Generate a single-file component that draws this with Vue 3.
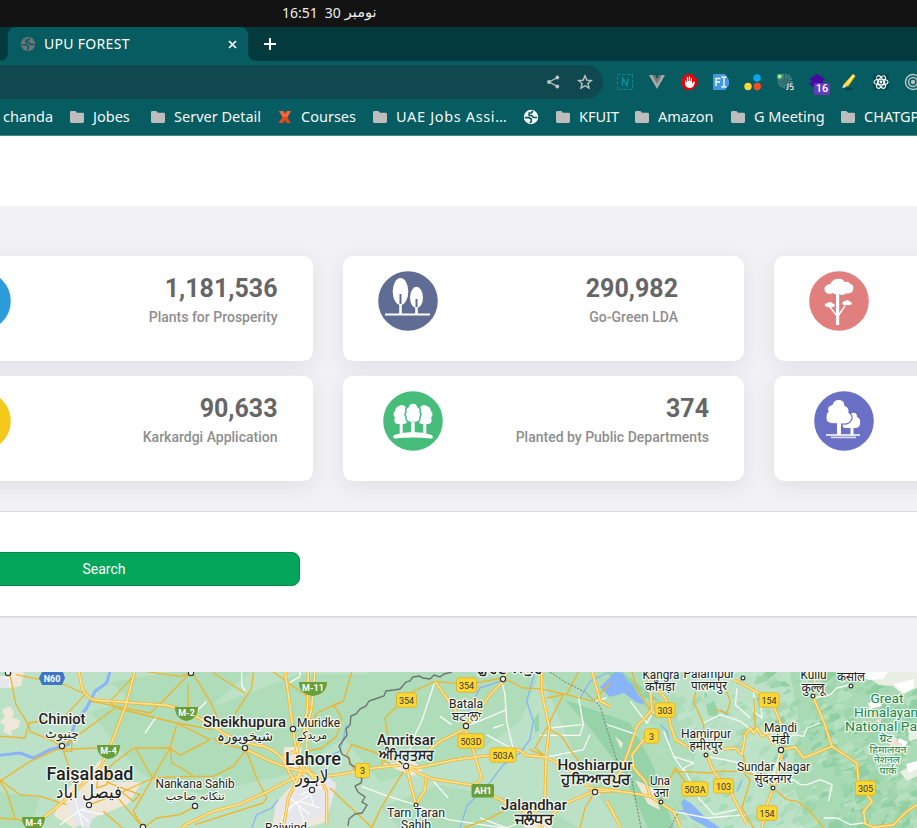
<script setup>
const bookmarks = [
  { label: 'chanda', icon: 'none', w: 67 },
  { label: 'Jobes', icon: 'folder', w: 81 },
  { label: 'Server Detail', icon: 'folder', w: 127 },
  { label: 'Courses', icon: 'x', w: 95 },
  { label: 'UAE Jobs Assi…', icon: 'folder', w: 151, wide: true },
  { label: '', icon: 'globe', w: 32 },
  { label: 'KFUIT', icon: 'folder', w: 79 },
  { label: 'Amazon', icon: 'folder', w: 96 },
  { label: 'G Meeting', icon: 'folder', w: 110 },
  { label: 'CHATGPT', icon: 'folder', w: 110 },
]
const cards = [
  { value: '1,181,536', label: 'Plants for Prosperity', tone: '#2d9cdb', icon: 'none', l: 38.5, r: 35.5 },
  { value: '290,982', label: 'Go-Green LDA', tone: '#5f6c94', icon: 'ovals', l: 34.5, r: 66 },
  { value: '', label: '', tone: '#e17e7e', icon: 'acacia', l: 34.5, r: 35 },
  { value: '90,633', label: 'Karkardgi Application', tone: '#f5c91b', icon: 'none', l: 38.5, r: 35.5 },
  { value: '374', label: 'Planted by Public Departments', tone: '#47bd7c', icon: 'grove', l: 39.5, r: 35 },
  { value: '', label: '', tone: '#6a70c6', icon: 'pair', l: 39.5, r: 35 },
]

// Each map sheet uses a grid three times finer than the page.
const sheets = [
  {
    x: 0,
    major: [
      'M236 8L246 60Q262 95 290 97L500 112Q560 125 640 175Q700 222 790 235Q850 255 866 310L890 350',
      'M405 8L378 110L350 185L326 245L300 300L225 370L60 510',
      'M530 495L560 468L640 430L720 408L800 372L860 340L935 305',
      'M855 8L868 100L884 220L905 300L880 360L865 390L850 480',
      'M740 245L800 275L870 302L940 315',
      'M925 8L922 120L910 200L890 250L850 262',
    ],
    minor: [
      'M28 12L40 70L48 110L85 170L75 210L0 205', 'M48 20L120 35L175 42L255 78', 'M255 80L190 150L85 165', 'M275 100L350 115L450 135L470 118',
      'M85 165L90 190L160 220L185 235', 'M405 20L330 100L345 120L190 235',
      'M350 120L530 165L640 185', 'M573 12L600 50L630 100L660 165', 'M573 12L470 118M563 45L565 130', 'M760 12L755 60L700 145', 'M640 15L735 75', 'M930 90L820 12',
      'M530 170L510 240L458 330L400 430L430 480', 'M630 215L540 262L510 240L405 240L458 330', 'M512 240L515 285L545 300L580 325L640 325L700 295L735 250', 'M458 330L580 325',
      'M630 215L530 165', 'M185 235L215 320L235 350', 'M0 335L60 380L120 385L200 410', 'M0 340L90 280L170 245L290 240', 'M0 340L20 370L45 450', 'M400 240L330 295L320 350L290 360L295 315L325 300', 'M320 290L325 345L420 380L400 400L350 360',
      'M270 410L360 375L458 330', 'M350 385L430 480', 'M430 480L470 450L540 440L585 415', 'M740 250L770 330L800 390L790 405L585 470', 'M310 430L390 500', 'M0 450L60 455L90 480', 'M215 215L215 250L190 250M190 220L215 220', 'M420 8L540 25L573 15', 'M640 210L660 225L740 245',
    ],
    white: ['M470 145L435 195M585 135L620 100M735 70L725 50L725 12M860 50L900 25L900 12M180 470L235 430L280 410M230 430L265 460M220 370L235 430L250 480M240 425L310 440M850 430L930 380M845 450L890 400L920 480M870 390L930 440M30 20L30 60M10 30L50 25'],
    river: ['M330 10L320 45L285 70L260 120L225 165L205 230L150 245L100 270L60 255L0 262'],
    stream: ['M835 395L815 420L770 440L755 480'],
  },
  {
    x: 300,
    major: [
      'M45 8L35 120L20 190L20 300L40 330L75 325L115 320L220 300L315 290', 'M315 290L350 300L465 275L545 265L625 260L655 245L680 262L740 268L810 305L880 370',
      'M315 290L355 315L395 332L520 352L610 400L690 440L730 480', 'M405 40L450 105L495 170', 'M620 12L605 45L570 80L550 110L500 170', 'M490 185L420 220L345 280',
      'M495 185L515 230L525 265L545 330L520 355L555 370', 'M725 12L725 70L748 180L738 268L735 390L690 460', 'M320 300L335 360L348 410L375 365L378 330', 'M-20 275L20 310L60 330L80 370L80 470', 'M880 370L800 405L730 460', 'M880 370L940 370',
    ],
    minor: [
      'M405 40L330 75L255 150L265 215L245 290', 'M405 40L500 50L608 30L670 60L720 62L800 80L880 100L930 45', 'M155 230L140 260L165 310M155 230L230 255L270 290',
      'M155 12L130 100L100 110L125 150L110 205L65 240L20 250M130 100L50 135L20 190', 'M310 310L240 425L215 480M240 425L215 478L90 360', 'M740 180L705 240L735 265L690 245M740 180L785 205L820 260L840 285M740 180L790 80L740 90',
      'M880 380L855 420L840 480', 'M835 12L800 80', 'M490 480L560 455L610 430',
    ],
    white: ['M405 40L365 160L345 200L315 290M605 40L615 80L620 160L640 245L560 200M620 125L500 175M420 145L455 170M185 355L265 385L345 410L445 455L610 480M400 340L445 390M720 202L840 202L850 170L835 85M750 180L845 170M735 268L850 245L870 200M880 100L920 90M0 350L75 320M10 300L40 410M0 380L70 355M0 400L60 420M310 280L340 310M540 450L620 480L690 450M580 180L610 170'],
    river: [],
    stream: ['M705 8L680 100L700 160L690 215L660 255L610 290L565 350L500 415L480 480', 'M140 170L120 250L20 290', 'M600 40L540 60L500 140', 'M840 90L870 40L920 15'],
  },
  {
    x: 607,
    major: [
      'M-45 8L-20 100L10 115M120 12L130 65L135 125L90 175L65 250L20 360', 'M140 55L175 90L190 170L205 215L240 235', 'M155 185L110 215L75 260L80 300L115 340L130 385L160 405', 'M380 35L410 50L455 75L500 115L525 175L520 240', 'M520 245L565 237L590 270L675 235L650 160L620 90L625 12', 'M675 235L750 285L755 350L795 400L770 430L775 465', 'M770 465L800 478L860 470L900 430L930 410', 'M300 262L320 310L375 380L420 470', 'M525 260L510 330L480 410L465 480', 'M-60 360L0 365L75 375L130 385', 'M160 405L200 430L220 475', 'M0 400L40 475',
      'M350 243L385 240L405 260L415 200L430 180L440 195L450 180L465 205L480 195L500 230',
    ],
    minor: ['M75 12L90 60L140 145M240 235L350 243M320 310L410 310L440 320L500 355M320 315L200 310M270 50L260 100L290 170L290 200M350 50L370 100L360 135L325 125M440 90L445 180L405 200M410 260L415 320L430 335L405 420L440 480M498 360L540 395L570 400L610 430L650 480M240 350L205 300L190 330L165 345L165 395'],
    white: ['M170 190L200 265L260 285L230 300L275 390L320 440L390 425M200 265L230 310M300 265L350 275L400 285L450 320M440 70L440 130L465 150L460 95M290 165L340 140L400 160L445 195M390 60L385 110L430 150M530 220L560 200L590 205L600 180L640 165M620 90L670 80L690 60L730 50M530 340L560 335L580 350L600 350L640 335L675 350L665 400M70 100L120 165L140 130M0 170L90 200M650 450L690 450L730 470L770 465M200 430L300 450L420 440M520 250L500 320'],
    river: [],
    stream: ['M160 170L180 190L185 215', 'M205 430L240 430', 'M340 125L360 140', 'M530 265L535 300', 'M390 370L405 335'],
  },
]

// Hill relief: soft facets, denser toward the mountains in the east.
const terrain = []
let seed = 71
function rnd() {
  seed = (seed * 16807) % 2147483647
  return seed / 2147483647
}
for (let i = 0; i < 620; i++) {
  const x = 635 + Math.sqrt(rnd()) * 285
  const y = rnd() * 160
  const s = 3 + rnd() * 8
  const east = x > 775 + 60 * (y / 160 - 0.5)
  const shades = east ? ['#9dd5ad', '#a9dab5', '#90cfa3', '#b6e0c0'] : ['#aedcb9', '#b4dfc0', '#bfe4ca', '#a8dab5']
  terrain.push({
    d: `M${x} ${y}l${s} ${-s * rnd()}l${s * 0.7 * rnd()} ${s * 0.6}l${-s * 0.9} ${s * 0.8 * rnd()}l${-s * 0.6} ${s * 0.1}z`,
    fill: shades[Math.floor(rnd() * 4)],
  })
}

const towns = [
  [62, 74], [8, 1], [191, 1], [293, 57], [245, 76], [89, 133], [195, 134], [143, 155], [312, 118], [406, 94], [503, 7], [466, 54], [595, 120],
  [416, 133, 1.9], [743, 6, 1.9], [813, 24, 1.9], [851, 14, 1.9], [706, 83, 1.9], [781, 78], [773, 116, 1.9], [661, 130, 1.9],
]
const shields = [
  ['354', 406.5, 28], ['354', 466.5, 13], ['503D', 471, 69], ['503A', 503, 83], ['3', 362.5, 98.5], ['303', 665, 38], ['3', 651.5, 64],
  ['154', 769, 28], ['503A', 695, 117], ['103', 723.5, 114], ['154', 767, 141], ['305', 865.5, 116],
].map(([t, x, y]) => ({ t, x, y, w: t.length === 4 ? 26 : t.length === 3 ? 20 : 14 }))
const motorways = [['M-11', 313, 16, 28], ['M-2', 186.5, 41, 23], ['M-4', 108.5, 79, 23], ['M-4', 33.5, 151, 23]]

const labels = [
  ['Chiniot', 62, 52, 14.5, 47, 'b'], ['چنیوٹ', 62, 66, 13, 34], ['Sheikhupura', 244.5, 55, 14.5, 83, 'b'], ['شیخوپورہ', 245, 69, 14, 56],
  ['Muridke', 318.5, 55, 12, 43], ['مریدکے', 312, 67, 11, 30], ['Lahore', 313, 93, 18, 56, 'b'], ['لاہور', 312, 111, 18, 33],
  ['Faisalabad', 90, 108, 18, 87, 'b'], ['فیصل آباد', 89, 126, 18, 66], ['Nankana Sahib', 195, 116, 12, 79], ['ننکانہ صاحب', 195, 128, 11, 59], ['Raiwind', 286, 160, 12, 42],
  ['Amritsar', 406, 73, 15, 58, 'b'], ['ਅੰਮ੍ਰਿਤਸਰ', 406, 88, 14, 55, 'h'], ['Batala', 466, 36, 12, 34], ['ਬਟਾਲਾ', 466, 48, 12, 29],
  ['ਗੁਰਦਾਸਪੁਰ', 510, 1, 13, 66, 'h'], ['Tarn Taran', 416, 145, 12, 58], ['Sahib', 416, 157, 12, 30], ['Jalandhar', 534, 138, 15, 66, 'b'], ['ਜਲੰਧਰ', 534, 152, 14, 39, 'h'],
  ['Hoshiarpur', 595, 98, 15, 75, 'b'], ['ਹੁਸ਼ਿਆਰਪੁਰ', 596, 112, 14, 70, 'h'], ['Kangra', 661, 7, 12, 37], ['काँगड़ा', 660, 19, 12, 30], ['Palampur', 709, 6, 12, 51], ['पालमपुर', 709, 18, 12, 36],
  ['Kullu', 813.5, 7, 12, 26], ['कुल्लू', 813, 20, 12, 23], ['कसोल', 851, 9, 12, 28], ['Mandi', 780.5, 60, 12, 33], ['मंडी', 780.5, 72, 12, 18],
  ['Hamirpur', 706, 66, 12, 50], ['हमीरपुर', 706, 78, 12, 33], ['Sundar Nagar', 773.5, 99, 12, 73], ['सुंदरनगर', 773, 111, 12, 37], ['Una', 660, 113, 12, 20], ['उना', 661, 125, 12, 15],
  ['Great', 887, 31, 13.5, 33, 'g'], ['Himalayan', 886, 45, 13.5, 64, 'g'], ['National Park', 887, 59, 13.5, 84, 'g'],
  ['ग्रेट', 886, 70, 10, 13, 'g'], ['हिमालयन', 888, 81, 10, 37, 'g'], ['नेशनल', 887, 91, 10, 26, 'g'], ['पार्क', 888, 102, 10, 17, 'g'],
]
</script>

<template>
  <div class="screen">
    <div class="clock"><span>16:51</span><span>30</span><span class="month">نومبر</span></div>
    <div class="tabs">
      <div class="prev"></div>
      <div class="tab">
        <svg class="globe" viewBox="0 0 16 16"><circle cx="8" cy="8" r="7.1" fill="#70757a" /><path d="M1.700 8.700h4.600l2 1.500v2.300l-1.500 1.300M9.800 1.800L8.500 4H6.200v2.500h2.500l1.600 2h4" stroke="#065c61" stroke-width="1.600" fill="none" /></svg>
        <span class="title">UPU FOREST</span>
        <svg class="close" viewBox="0 0 9 9"><path d="M1 1l7 7M8 1l-7 7" stroke="#fff" stroke-width="1.7" /></svg>
      </div>
      <div class="rest"><svg viewBox="0 0 12 12"><path d="M6 0v12M0 6h12" stroke="#fff" stroke-width="2" /></svg></div>
    </div>
    <div class="toolbar">
      <div class="omnibox">
        <svg viewBox="0 0 16 16"><path d="M12.500 3.500L4 8l8.500 4.500" stroke="#bfc5c6" stroke-width="1.300" fill="none" /><circle cx="12.300" cy="3.500" r="1.900" fill="#bfc5c6" /><circle cx="4" cy="8" r="1.900" fill="#bfc5c6" /><circle cx="12.300" cy="12.500" r="1.900" fill="#bfc5c6" /></svg>
        <svg viewBox="0 0 16 16"><path d="M8 1.800l1.800 4.300 4.600.4-3.500 3 1.100 4.600L8 11.700l-4 2.400 1.100-4.600-3.500-3 4.600-.4z" stroke="#bfc5c6" stroke-width="1.400" fill="none" /></svg>
      </div>
      <div class="extensions">
        <svg viewBox="0 0 18 18"><rect x="1.500" y="1.500" width="15" height="15" fill="none" stroke="#078b9c" stroke-dasharray="3 2" /><path d="M6 13L7 5.500l4 7 1-7" stroke="#078b9c" stroke-width="1.700" fill="none" /></svg>
        <svg viewBox="0 0 18 18"><path d="M1 2h5l3 5 3-5h5L9 16z" fill="#aaa" /><path d="M4 2h3l2 4 2-4h3L9 11z" fill="#777" /></svg>
        <svg viewBox="0 0 18 18"><path d="M6 1h6l5 5v6l-5 5H6l-5-5V6z" fill="#e1080d" /><path d="M5 8v3q1 4 5 4 3 0 4-3l1-3-1-.5-2 2V5h-1.200v3H10V3.500H8.800V8H8V4H6.800v5H6V7z" fill="#fff" /></svg>
        <svg viewBox="0 0 18 18"><path d="M2 1h11l4 6v5l-4 5H2q-1 0-1-1V2q0-1 1-1z" fill="#4299df" /><path d="M4 13V5.500h4.500M4 9h4M9.500 4h1.500l1 1 1-1h1.500M12 5v8M9.500 14H11l1-1 1 1h1.500" stroke="#fff" stroke-width="1.300" fill="none" /></svg>
        <svg viewBox="0 0 18 18"><circle cx="13" cy="5" r="3.700" fill="#05a6f2" /><circle cx="4" cy="13.500" r="3.700" fill="#fbd534" /><circle cx="13.300" cy="13.500" r="3.700" fill="#f25022" /></svg>
        <svg viewBox="0 0 18 18"><circle cx="9" cy="8" r="5.300" fill="none" stroke="#427f80" stroke-width="4.500" stroke-dasharray="2 .7" /><circle cx="9" cy="8" r="4" fill="#3d7273" opacity=".8" /><rect x="1" y="1" width="5.500" height="5" rx="1" fill="#59a654" /><circle cx="3.700" cy="3.500" r="1.400" fill="#d7efd4" /><path d="M12 10.500v5q0 1-2 1M17 11h-2.500v2.500H17V16.500h-3" stroke="#ddd" fill="none" stroke-width="1.200" /></svg>
        <div class="stack"><svg viewBox="0 0 18 18"><path d="M9 1l8 5-3 2 3 3-8 5-8-5 3-3-3-2z" fill="#4609a4" /></svg><span>16</span></div>
        <svg viewBox="0 0 18 18"><path d="M3 12L13 1l2.500 2-7 10-4 1z" fill="#ffc829" /><path d="M6 11l7-9.500 1.500 1L7 12z" fill="#fff176" /><path d="M2 15l2-3 2 2z" fill="#fff" /><path d="M5 16h8" stroke="#064448" stroke-width="2" /></svg>
        <svg viewBox="0 0 18 18"><rect x="1" y="1" width="16" height="16" fill="#064c54" /><g fill="none" stroke="#fff" stroke-width="1.100"><ellipse cx="9" cy="9" rx="7" ry="2.800" /><ellipse cx="9" cy="9" rx="7" ry="2.800" transform="rotate(60 9 9)" /><ellipse cx="9" cy="9" rx="7" ry="2.800" transform="rotate(120 9 9)" /></g><circle cx="9" cy="9" r="1.400" fill="#fff" /></svg>
        <svg viewBox="0 0 18 18"><g fill="none" stroke="#b5c3c4" stroke-width="1.500"><circle cx="9" cy="9" r="7.500" /><circle cx="9" cy="9" r="4.400" /></g><circle cx="9" cy="9" r="2.200" fill="#b5c3c4" /></svg>
      </div>
    </div>
    <div class="bookmarks">
      <div v-for="b in bookmarks" :key="b.label" class="bookmark" :class="{ wide: b.wide }" :style="{ width: b.w + 'px' }">
        <svg v-if="b.icon === 'folder'" viewBox="0 0 14 12"><path d="M1.400 0h4l1.500 1.700h5.700q1.400 0 1.400 1.400v7.500Q14 12 12.600 12H1.400Q0 12 0 10.600V1.400Q0 0 1.400 0z" fill="#bdbdbd" /></svg>
        <svg v-if="b.icon === 'x'" viewBox="0 0 14 12"><path d="M1 0h4.500L7 3l2-3h4L9.500 6l3 6H8.500L7 9l-2 3H.500L4.500 6z" fill="#e8481c" /><path d="M1 0h4.500L7 3l2-3h4L9.500 6h-5z" fill="#f2683c" /></svg>
        <svg v-if="b.icon === 'globe'" class="world" viewBox="0 0 16 16"><circle cx="8" cy="8" r="7.200" fill="#fff" /><path d="M1.700 8.700h4.600l2 1.500v2.300l-1.500 1.300M9.800 1.800L8.500 4H6.200v2.500h2.500l1.600 2h4" stroke="#065c61" stroke-width="1.700" fill="none" /></svg>
        <span>{{ b.label }}</span>
      </div>
    </div>
    <div class="page-head"></div>
    <div class="cards">
      <div v-for="c in cards" :key="c.tone" class="card" :style="{ paddingLeft: c.l + 'px', paddingRight: c.r + 'px' }">
        <svg class="badge" viewBox="0 0 60 60">
          <circle cx="30" cy="30" r="29.800" :fill="c.tone" />
          <g v-if="c.icon === 'ovals'"><ellipse cx="22.500" cy="20.500" rx="7.800" ry="13.500" fill="#fff" /><ellipse cx="38.500" cy="26.500" rx="6.500" ry="10.700" fill="#fff" /><path d="M22.500 33v10M38.500 36v7" stroke="#fff" stroke-width="2.600" /><path d="M22.500 23v10M38.500 28v8" stroke="#5f6c94" stroke-width="2" /><path d="M7 43.500h45" stroke="#fff" stroke-width="2.200" /></g>
          <g v-if="c.icon === 'grove'" fill="#fff">
            <path d="M18 14q4 0 5 3 4 1 2 5 2 3 0 5 1 5-4 6h-7q-4-2-2-6-3-4 0-7 0-4 6-6zM42 14q-4 0-5 3-4 1-2 5-2 3 0 5-1 5 4 6h7q4-2 2-6 3-4 0-7 0-4-6-6z" /><path d="M16.700 32h3v11h-3zM40.300 32h3v11h-3z" /><path d="M30 12q4 0 5 4 3 1 2 5 2 2 0 5 1 5-5 5.500h-4q-6-.5-5-5.500-2-3 0-5-1-4 2-5 1-4 5-4z" stroke="#47bd7c" stroke-width="1.500" /><path d="M28.300 31h3.400v12h-3.400zM11 44q19-6 38 0 2 4-1 3.500-18-2-36 0-3 0-1-3.500z" />
          </g>
          <g v-if="c.icon === 'acacia'" fill="#fff"><path d="M20 23q-5-1-4.500-6 2-4 6-4 2-5 7-5 5-1 7 3 4-1 6 2 4 1 2.500 6-1 4-7 3.500-3 2.500-7 .5-5 1-6-1-2 1-4 1z" /><path d="M27 23h3.200v31H27z" /><path d="M21 36l7 9M36 35l-7 10" stroke="#fff" stroke-width="1.400" /><path d="M15.500 34q1-2 3-2 3-2 5 .5 3 0 2 3-3 1-4 1-5 0-6-2.500zM33 32q1-2 3-2 3-2 4 0 3 1 3 3-2 2-5 1-4 1-5-2z" /></g>
          <g v-if="c.icon === 'pair'" fill="#fff"><path d="M38 22q5-1 5 4 4 2 3 5 1 5-4 6H30q-3-3 0-6z" /><path d="M36.500 36h3v8h-3z" /><path d="M17 32.500q-6-1-5-7 0-4 2-5-2-5 4-7 2-6 8-5 5 1 5 6 5 2 4 7 5 4 2 8-2 4-8 3.500z" stroke="#6a70c6" stroke-width="1.200" /><path d="M23 31h4v13h-4z" /><path d="M12 43h34v2H12zM17 45.500h25v1.800H17z" opacity=".75" /></g>
        </svg>
        <div class="figures"><strong>{{ c.value }}</strong><span>{{ c.label }}</span></div>
      </div>
    </div>
    <div class="filter"><button class="search">Search</button></div>
    <svg class="map" viewBox="0 0 917 156" width="917" height="156">
      <rect width="917" height="156" fill="#bbe2c6" />
      <g fill="#afddb9">
        <path d="M90 40l60-18 70 10 80-30h70l-20 60-60 40-90 20-60-20zM370 0h170l-20 50-50 35-90 25-50-60zM540 0h120l40 60-20 96h-60l-40-60zM380 135l60-22 100 20 40 23h-180zM0 120l40 5-10 31H0zM110 10l60-10h80l-40 35-60 10z" />
      </g>
      <path d="M790 0h127v156H810l-20-50 10-50z" fill="#a8dab4" />
      <path d="M565 28l15 5 50 18 22 40 22 65h-26l-28-60-30-40zM534 47l5-6v18l-4 2zM704 20l10 8 6 18-12-3zM604 0h18l40 30-20-5z" fill="#96d3a8" />
      <path v-for="(p, i) in terrain" :key="i" :d="p.d" :fill="p.fill" />
      <path d="M846 0h71v16l-16 5-8-7-14-1-10-7-10 3zM900 100l17-10v14l-10 5zM886 61l12 6-6 6-8-3zM908 56l9-3v14l-8 2z" fill="#e9efe2" />
      <path d="M851 0l18 8 14-1 5-7zM894 12l20-5v9l-10 6zM868 31l10-3 4 6-12 3zM899 66l9 4-4 6-8-2zM906 92l11-3v8l-8 4z" fill="#fff" />
      <path d="M888 64l14 8 1 8-12-3zM875 49l7-3-2 6z" fill="#efdfd0" />
      <g fill="#efe8d8">
        <path d="M2 38l8-4 4 6-2 6 8 2-1 7-8 4 1 5-9-4 2-6-5-4 5-5zM12 0h12l-3 14-10 2zM62 120l28-20 10-12 8 7-2 15 36 0-14 22-30 12-24 12-20-12zM0 12l14-12v15zM276 130l20-20h40l-10 40-20 6h-34zM284 75h18l-5 25-14-9zM383 92l30-4 10 10-10 6zM525 140l22 2 5 14h-28zM635 108l18 8 7 22-12-6zM615 64l8 7-2 6z" />
      </g>
      <g fill="#e6e7ed"><path d="M68 131l12-8 6 12 9 5-6 16-14-4zM278 130l20-13 27-17 11 13-6 23-14 10-28 8-12-12zM398 92l9-5 9 8-10 6zM530 145l15-1 4 10h-15zM591 118l7-3 2 8-8 3zM0 4h13l-4 12H0z" /></g>
      <path d="M600 15l15-15 8 1 4 8 6 4 3 7 7 8 2 5-9-3-12-9-14 4zM684 127l8 5 14 14 14 10h-12l-16-9-8-8-3-8z" fill="#8ab4f8" />
      <g v-for="s in sheets" :key="'w' + s.x" :transform="`translate(${s.x} -4) scale(.33333)`" fill="none" stroke-linejoin="round">
        <path v-for="d in s.river" :key="d" :d="d" stroke="#8ab4f8" stroke-width="9" />
        <path v-for="d in s.stream" :key="d" :d="d" stroke="#8ab4f8" stroke-width="4" />
        <path v-for="d in s.white" :key="d" :d="d" stroke="#f8fbf6" stroke-width="4" />
        <path v-for="d in s.minor" :key="d" :d="d" stroke="#f0b429" stroke-width="4" />
      </g>
      <g v-for="s in sheets" :key="'m' + s.x" :transform="`translate(${s.x} -4) scale(.33333)`" fill="none" stroke-linejoin="round">
        <path v-for="d in s.major" :key="d" :d="d" stroke="#f2b634" stroke-width="9.500" />
        <path v-for="d in s.major" :key="d + 'i'" :d="d" stroke="#ffe69a" stroke-width="4.500" />
      </g>
      <path d="M452 0l-8 2-4 3-6-2-4 4-7-1-4-2-6 1-3 4-4 1-6 7-6 1-8 1-2 5-9 3-6 2-3 5-6 3-4 5-5 2-1 9-4 4 1 6-8 11 3 8 7 4 1 6 5 3 2 7 5 5-1 4-6 3 3 6 7 5-3 5 5 3-5 8-7 1-6 5-1 7" fill="none" stroke="#6e7472" stroke-width="1.400" />
      <path d="M550 0l15 10 20 10 15 14 9 30 8 25 15 20 9 47M670 156l8-15" fill="none" stroke="#747b77" stroke-dasharray="2 1.500" />
      <circle v-for="(t, i) in towns" :key="'t' + i" :cx="t[0]" :cy="t[1]" :r="t[2] || 2.600" fill="#fff" stroke="#333" stroke-width="1.200" />
      <g class="shield" v-for="s in shields" :key="s.t + s.x">
        <rect :x="s.x - s.w / 2" :y="s.y - 7.200" :width="s.w" height="14.400" rx="2.500" fill="#fdd835" stroke="#dca81c" stroke-width=".7" />
        <text :x="s.x" :y="s.y + 3.500">{{ s.t }}</text>
      </g>
      <g class="shield light" v-for="m in motorways" :key="m[1]">
        <path :d="`M${m[1] - m[3] / 2} ${m[2] - 6}h${m[3]}q0 12-${m[3] / 2} 14q-${m[3] / 2}-2-${m[3] / 2}-14z`" fill="#689f38" />
        <text :x="m[1]" :y="m[2] + 3">{{ m[0] }}</text>
      </g>
      <g class="shield light"><rect x="471.500" y="112" width="22.500" height="13.500" rx="1.500" fill="#689f38" /><text x="483" y="122.300">AH1</text><path d="M42 0h21l2 6-3 7H42l-3-7z" fill="#3f75c6" /><text x="52" y="9.800">N60</text></g>
      <g class="labels"><text v-for="l in labels" :key="l[0]" :class="l[5]" :x="l[1]" :y="l[2]" :font-size="l[3]" :textLength="l[4]" lengthAdjust="spacingAndGlyphs">{{ l[0] }}</text></g>
    </svg>
  </div>
</template>

<style>
body { margin: 0; overflow: hidden; }
</style>
<style scoped>
.screen { width: 917px; height: 828px; overflow: hidden; background: #f1f1f6; font-family: Roboto, sans-serif; }
.clock { height: 27px; box-sizing: border-box; padding: 0 0 2px 282px; display: flex; gap: 7px; align-items: center; background: #131313; color: #eee; font: 14px/25px "Noto Sans", sans-serif; }
.month { font-family: "DejaVu Sans", sans-serif; font-size: 14.500px; margin-left: -3px; }
.tabs { height: 34px; display: flex; background: #065c61; }
.prev { width: 8px; background: #033a3e; border-radius: 0 0 8px 0; }
.tab { width: 240px; box-sizing: border-box; padding: 0 12px; display: flex; align-items: center; background: #065c61; border-radius: 8px 8px 0 0; color: #fff; position: relative; }
.tabs { background: linear-gradient(#033a3e 50%, #065c61 50%); }
.tab .globe { width: 16px; height: 16px; }
.tab .title { margin: -2px 0 0 8px; font: 14px "Noto Sans", sans-serif; letter-spacing: .3px; }
.tab .close { width: 9px; height: 9px; margin: 0 -.5px 0 auto; }
.rest { flex: 1; padding: 11px 0 0 16px; background: #033a3e; border-radius: 0 0 0 8px; }
.rest svg { display: block; width: 12px; height: 12px; }
.toolbar { height: 38px; display: flex; align-items: center; background: #065c61; }
.omnibox { flex: none; width: 603px; height: 34px; margin-top: 4px; box-sizing: border-box; display: flex; align-items: center; justify-content: flex-end; gap: 16px; padding-right: 10px; background: #0f484e; border-radius: 0 17px 17px 0; }
.omnibox svg { width: 16px; height: 16px; }
.extensions { display: flex; gap: 14px; padding: 4px 0 0 13px; }
.extensions svg { display: block; flex: none; width: 18px; height: 18px; }
.stack { position: relative; width: 18px; height: 18px; }
.stack span { position: absolute; left: 6px; top: 10px; width: 16px; height: 12px; background: #673ab7; color: #fff; font: 500 11px/12px Roboto, sans-serif; text-align: center; border-radius: 2px; }
.bookmarks { height: 37px; box-sizing: border-box; display: flex; padding-left: 3px; background: #065c61; border-bottom: 1px solid #3f858a; }
.bookmark { flex: none; display: flex; align-items: center; gap: 9px; height: 35px; color: #f4f7f7; font: 14.500px "Noto Sans", sans-serif; white-space: nowrap; }
.bookmark span { margin-top: -2px; }
.bookmark.wide span { letter-spacing: .65px; }
.bookmark svg { flex: none; width: 14px; height: 12px; }
.bookmark .world { width: 16px; height: 16px; margin-left: -1px; }
.page-head { height: 70px; background: #fff; }
.cards { width: 1263px; margin: 50px 0 30px -88px; display: grid; grid-template-columns: repeat(3, 401px); grid-auto-rows: 105px; gap: 15px 30px; }
.card { box-sizing: border-box; padding-top: 15px; display: flex; justify-content: space-between; background: #fff; border-radius: 10px; box-shadow: 0 5px 20px rgba(40, 40, 60, .09); }
.badge { width: 60px; height: 60px; flex: none; }
.figures { display: flex; flex-direction: column; align-items: flex-end; }
.figures strong { font-size: 25px; line-height: 34px; padding-top: 1px; color: #666; }
.figures span { font-size: 14px; line-height: 24px; margin-top: -1px; font-weight: 500; color: #8e8e8e; }
.filter { height: 106px; box-sizing: border-box; padding-top: 40px; background: #fff; border-top: 1px solid #dadadd; border-bottom: 1px solid #d8d8db; box-shadow: 0 1px 1px rgba(0, 0, 0, .06); }
.search { display: block; width: 392px; height: 34px; margin-left: -92px; border: 1px solid #058c4b; border-radius: 8px; background: #04a65b; color: #fff; font: 14px Roboto, sans-serif; padding: 0; }
.map { display: block; margin-top: 55px; }
.labels text { font-family: Roboto, "Noto Sans", "DejaVu Sans", sans-serif; text-anchor: middle; fill: #222; paint-order: stroke; stroke: #fff; stroke-opacity: .8; stroke-width: 2.500px; stroke-linejoin: round; }
.labels .b { font-weight: 500; }
.labels .h { font-weight: 700; }
.labels .g { fill: #218849; }
.shield text { font: 9px Roboto, sans-serif; fill: #333; text-anchor: middle; }
.shield.light text { fill: #fff; font-weight: 700; }
</style>
